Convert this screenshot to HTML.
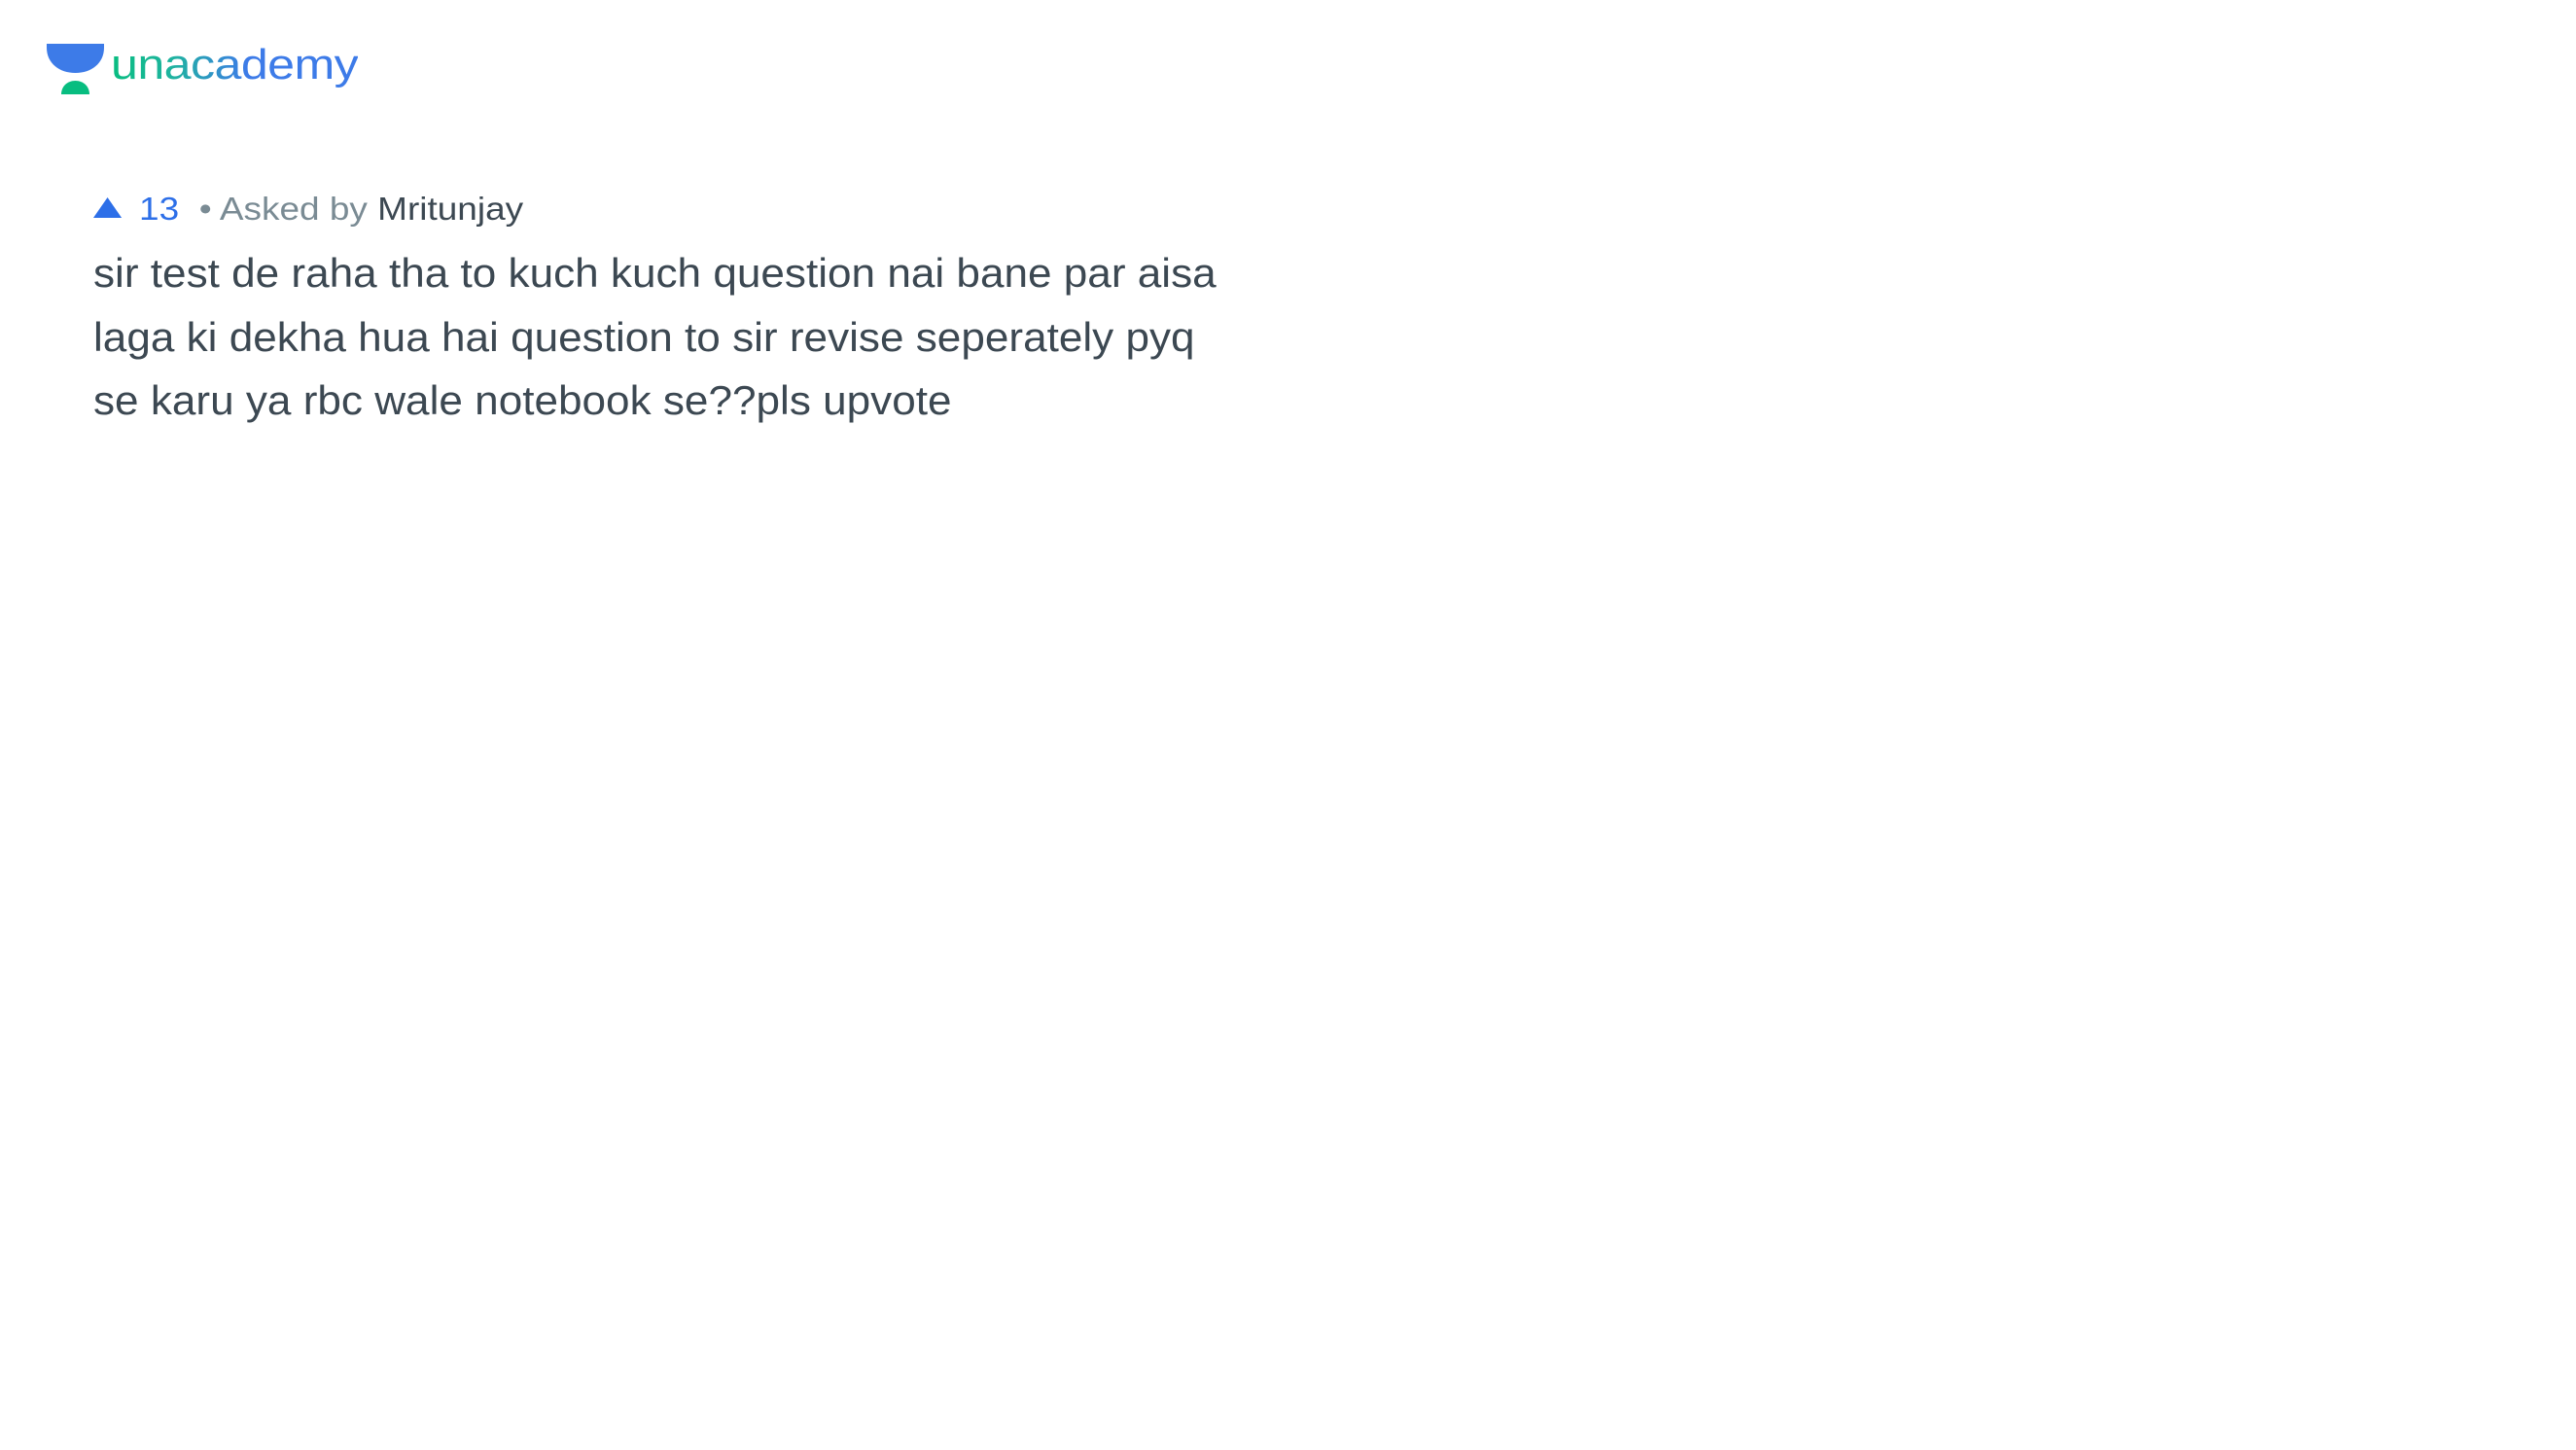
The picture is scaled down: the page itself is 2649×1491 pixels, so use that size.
<!DOCTYPE html>
<html><head><meta charset="utf-8"><style>
html,body{margin:0;padding:0;background:#fff;width:2649px;height:1491px;overflow:hidden;font-family:"Liberation Sans",sans-serif}
.logo{position:absolute;left:48px;top:45px}
.brand{position:absolute;left:114px;top:42px;font-size:44px;letter-spacing:-0.5px;transform:scaleX(1.14);transform-origin:left;background:linear-gradient(90deg,#08bd80 0%,#1fb3a0 25%,#3d7be8 55%,#3d7be8 100%);-webkit-background-clip:text;color:transparent}
.meta{position:absolute;left:96px;top:196px;font-size:33px;white-space:nowrap;transform:scaleX(1.12);transform-origin:left}
.tri{display:inline-block;width:0;height:0;border-left:13px solid transparent;border-right:13px solid transparent;border-bottom:21px solid #2d6fe8;margin-right:16px;vertical-align:2px}
.q{position:absolute;left:96px;top:248px;font-size:42px;line-height:65.5px;color:#3c4852;white-space:nowrap;transform:scaleX(1.05);transform-origin:left}
</style></head><body>
<svg class="logo" width="60" height="54" viewBox="0 0 60 54">
<path d="M0 0 H59 V4 C59 20 46 30 29.5 30 C13 30 0 20 0 4 Z" fill="#3d7be8"/>
<path d="M15 52 C15 44 21 38 29.5 38 C38 38 44 44 44 52 Z" fill="#08bd80"/>
</svg>
<div class="brand">unacademy</div>
<div class="meta"><span class="tri"></span><span style="color:#2d6fe8">13</span> <span style="color:#7a8b94">&nbsp;• Asked by</span> <span style="color:#3c4852">Mritunjay</span></div>
<div class="q">sir test de raha tha to kuch kuch question nai bane par aisa<br>laga ki dekha hua hai question to sir revise seperately pyq<br>se karu ya rbc wale notebook se??pls upvote</div>
</body></html>
